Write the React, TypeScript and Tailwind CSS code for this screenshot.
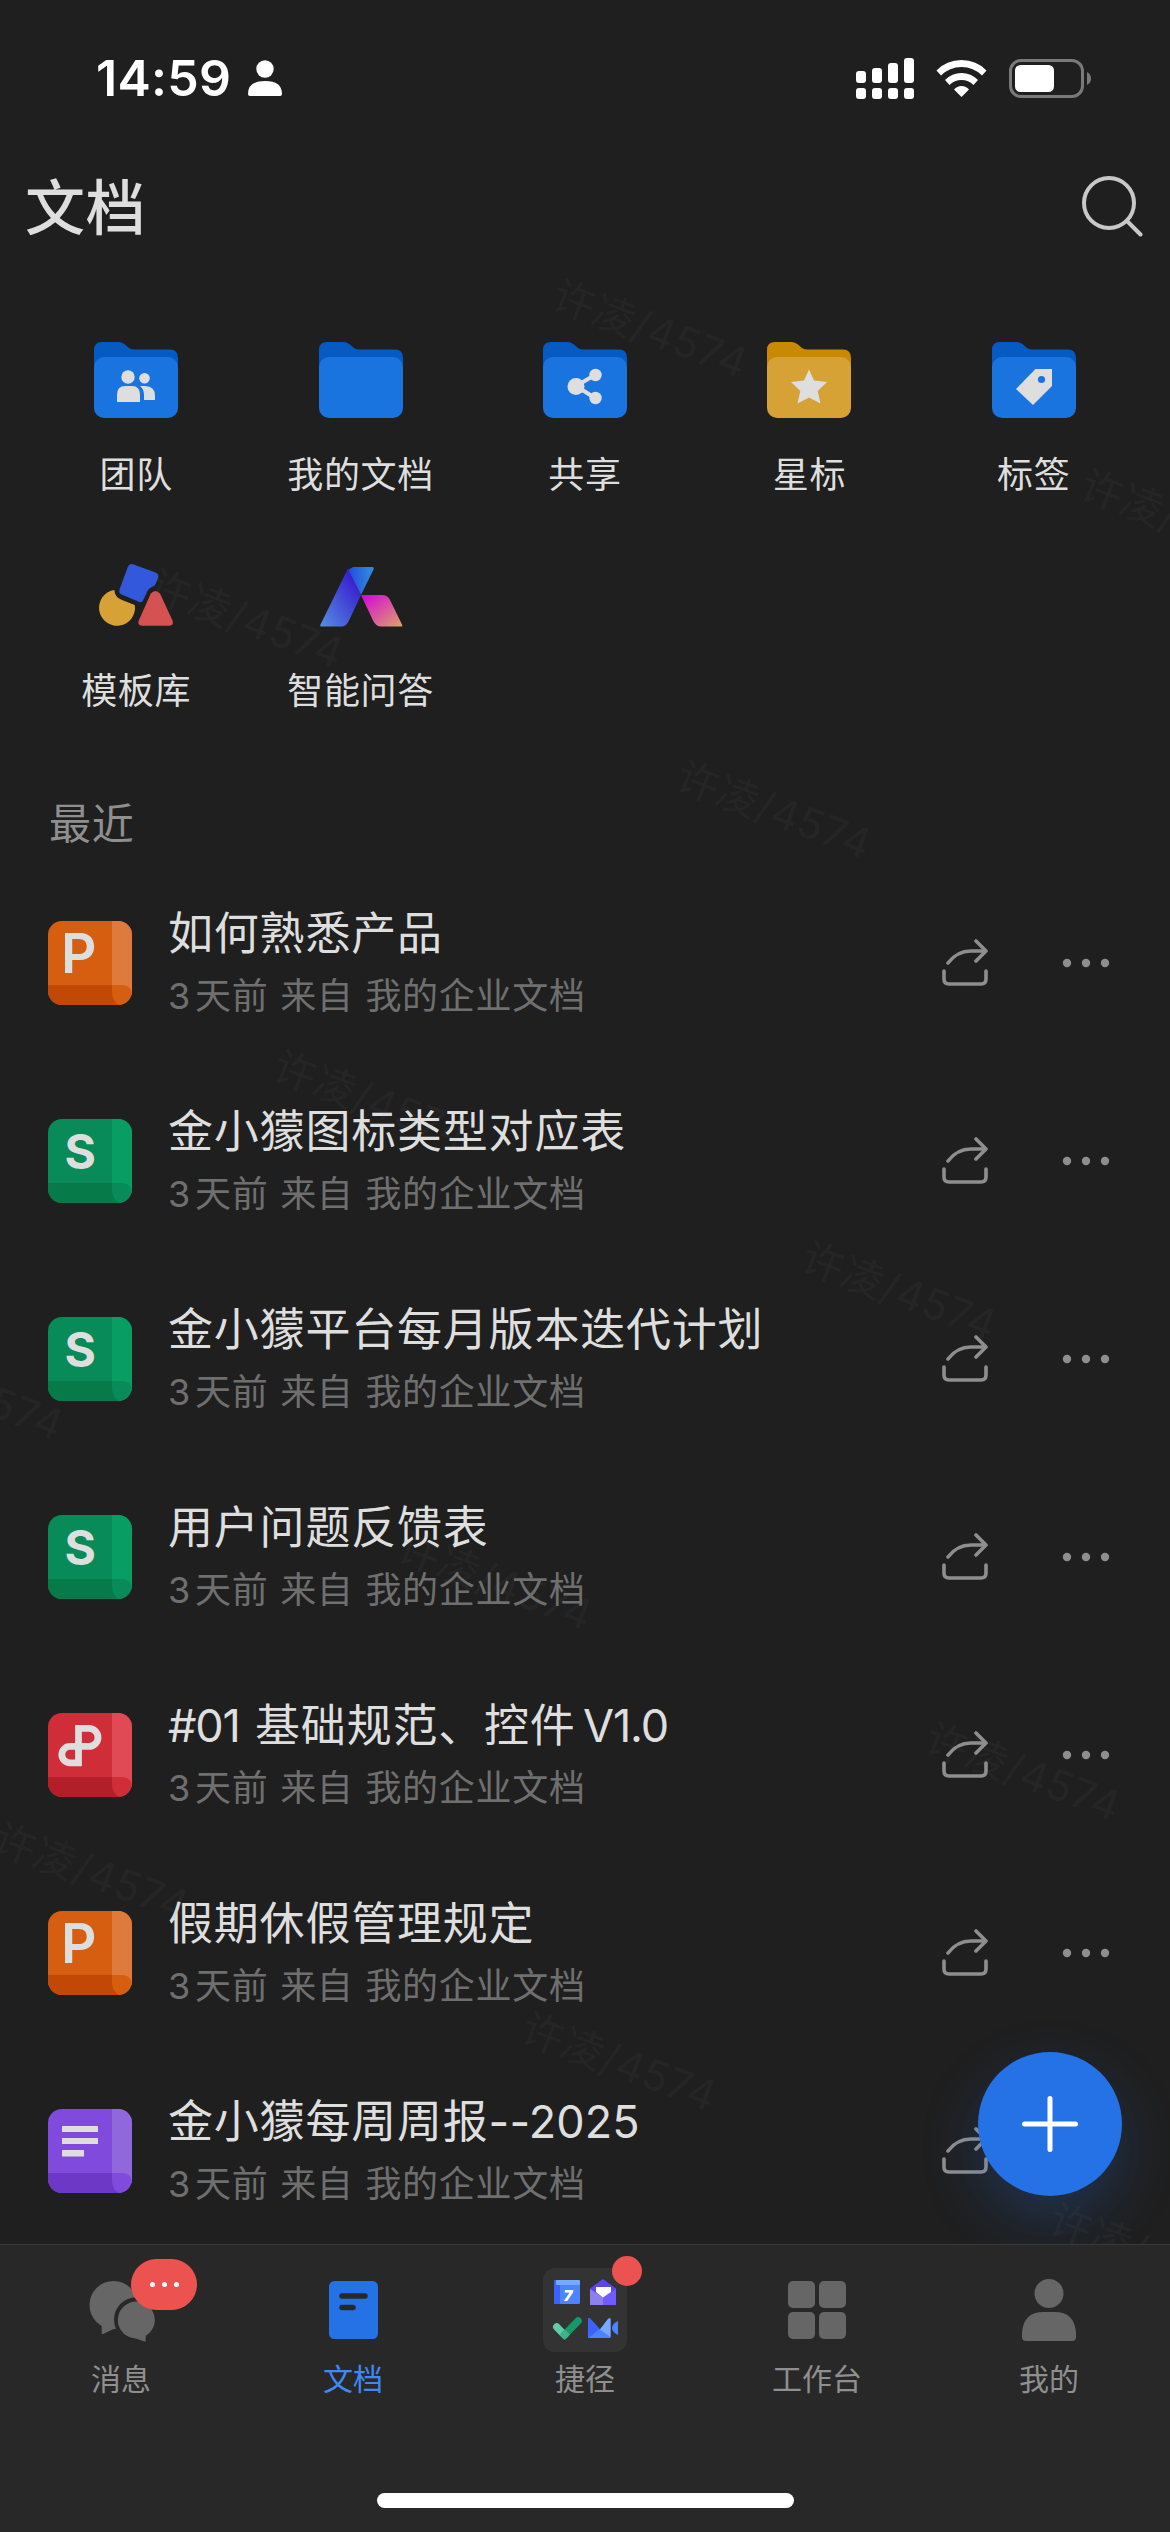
import React, { useState } from "react";

type DocKind = "ppt" | "sheet" | "pdf" | "form";

const docs: { title: string; kind: DocKind; latin?: string }[] = [
  { title: "如何熟悉产品", kind: "ppt" },
  { title: "金小獴图标类型对应表", kind: "sheet" },
  { title: "金小獴平台每月版本迭代计划", kind: "sheet" },
  { title: "用户问题反馈表", kind: "sheet" },
  { title: "#01 基础规范、控件 V1.0", kind: "pdf", latin: "tracking-[-1.2px] first:mr-1 last:-ml-1" },
  { title: "假期休假管理规定", kind: "ppt" },
  { title: "金小獴每周周报--2025", kind: "form", latin: "tracking-[0.1px]" },
];

const docColors: Record<DocKind, { main: string; side: string; bottom: string }> = {
  ppt: { main: "#d65e10", side: "#dd7a3c", bottom: "#c24805" },
  sheet: { main: "#088b58", side: "#089e63", bottom: "#067a48" },
  pdf: { main: "#cf2e38", side: "#e04a54", bottom: "#b31f28" },
  form: { main: "#804bdd", side: "#9167dc", bottom: "#6d38c6" },
};

// watermark centres
const watermarks = [
  [650, 329],
  [1178, 519],
  [246, 619],
  [774, 810],
  [371, 1100],
  [899, 1291],
  [-34, 1391],
  [495, 1581],
  [1023, 1772],
  [91, 1872],
  [619, 2062],
  [1147, 2253],
];

const DocIcon = ({ kind }: { kind: DocKind }) => {
  const c = docColors[kind];
  return (
    <svg width="84" height="84" viewBox="0 0 84 84" className="shrink-0 overflow-hidden rounded-[14px]">
      <rect width="84" height="84" fill={c.main} />
      <rect x="64" width="20" height="74" fill={c.side} />
      <rect y="64" width="74" height="20" fill={c.bottom} />
      <path d="M64 64H75Q84 65 84 74V84H71Q64 80 64 71Z" fill={c.main} />
      {kind === "ppt" && (
        <text x="13" y="52" fontSize="55" fontWeight="600" fill="#dedede" fontFamily="Inter, sans-serif">
          P
        </text>
      )}
      {kind === "sheet" && (
        <text x="16.500" y="49.500" fontSize="48" fontWeight="700" fill="#dedede" fontFamily="Inter, sans-serif">
          S
        </text>
      )}
      {kind === "pdf" && (
        <path
          d="M30.5 49.8V15.4H41a9 9 0 0 1 0 18H22a8.2 8.2 0 0 0 0 16.4Z"
          fill="none"
          stroke="#dedede"
          strokeWidth="6.8"
        />
      )}
      {kind === "form" && <path d="M14 17h36v6H14zM14 29h36v6H14zM14 41h22v6.5H14z" fill="#dedede" />}
    </svg>
  );
};

// latin runs get their own letter spacing
const DocTitle = ({ title, latin }: { title: string; latin?: string }) => (
  <p className="text-[45px] leading-[63px] tracking-[0.8px]">
    {title
      .split(/([ -~]+)/)
      .filter(Boolean)
      .map((part, i) => (
        <span key={i} className={/^[ -~]/.test(part) ? latin : undefined}>
          {part}
        </span>
      ))}
  </p>
);

const Folder = ({ gold, children }: { gold?: boolean; children?: React.ReactNode }) => (
  <svg width="84" height="76" viewBox="0 0 84 76">
    <path d="M0 40V8Q0 0 8 0H25Q28 0 31 2.5L35 6Q37.500 7.500 41 7.500H76Q84 7.500 84 16V40Z" fill={gold ? "#ca8903" : "#055bc2"} />
    <rect y="15" width="84" height="61" rx="10" fill={gold ? "#d6a235" : "#1a74df"} />
    <g fill="#dedede">{children}</g>
  </svg>
);

const shortcuts = [
  {
    label: "团队",
    icon: (
      <Folder>
        <circle cx="34" cy="35" r="6.700" />
        <circle cx="50.500" cy="36.300" r="5.300" />
        <path d="M23 60V53Q23 44 31 44H38Q46 44 46 53V60Z" />
        <path d="M46 44H51Q61 44 61 54V58H50V53Q50 47 46 44Z" />
      </Folder>
    ),
  },
  { label: "我的文档", icon: <Folder /> },
  {
    label: "共享",
    icon: (
      <Folder>
        <path d="M33 44L52 33M33 44L52 56" stroke="#dedede" strokeWidth="4" />
        <circle cx="33" cy="44.500" r="8.500" />
        <circle cx="52.500" cy="33" r="6.200" />
        <circle cx="52.500" cy="56" r="6.200" />
      </Folder>
    ),
  },
  {
    label: "星标",
    icon: (
      <Folder gold>
        <path d="M42 27.500L47 38.500L60 40L50.700 49L53.500 61.500L42 55.500L30.500 61.500L33.300 49L24 40L37 38.500Z" />
      </Folder>
    ),
  },
  {
    label: "标签",
    icon: (
      <Folder>
        <path d="M43.500 27H60V44L41 63L24 47Z" />
        <circle cx="49.500" cy="37.500" r="3.600" fill="#1a74df" />
      </Folder>
    ),
  },
  {
    label: "模板库",
    icon: (
      <svg width="84" height="84" viewBox="0 0 84 84">
        <path d="M20.400 36Q20.500 43.500 28 46L40.800 51A18 18 0 1 1 20.400 36Z" fill="#d6a235" />
        <path
          d="M34 12.500Q35.500 9 39 10.300L61.500 18.500Q65 20 64.200 23.500L61.800 29.500Q61 32 58.500 32.500Q55 34 53 38L49 46.500Q48 48.800 45.500 48L27.500 40.500Q24.500 39 25.500 35.500Z"
          fill="#3458db"
        />
        <path d="M56.800 39.500Q61.400 34.500 66 39.500L78.500 66.500Q80 71.500 75.500 71.800H48Q43.200 71.500 44.800 66.500Z" fill="#d55252" />
      </svg>
    ),
  },
  {
    label: "智能问答",
    icon: (
      <svg width="84" height="84" viewBox="0 0 84 84">
        <defs>
          <linearGradient id="stem" x1="1" y1="0" x2="0" y2="1">
            <stop offset="0.200" stopColor="#3a22d0" />
            <stop offset="1" stopColor="#5590e0" />
          </linearGradient>
          <linearGradient id="cap" x1="0" y1="0" x2="1" y2="0">
            <stop offset="0" stopColor="#234bdc" />
            <stop offset="1" stopColor="#328fdc" />
          </linearGradient>
          <linearGradient id="leg" x1="0" y1="0" x2="1" y2="1">
            <stop offset="0" stopColor="#d303dc" />
            <stop offset="1" stopColor="#dfa269" />
          </linearGradient>
        </defs>
        <path d="M34 13H53Q55.500 13 54.500 15.500L42 41L29 16Z" fill="url(#cap)" />
        <path d="M29 14.500L42 41L30 66.500Q27.500 72.500 22 72.500H2Q0.500 72.500 1.500 70.500Z" fill="url(#stem)" />
        <path d="M42 41H63Q68.500 41 71 46L83 70.500Q84 72.500 82 72.500H62Q57 72.500 54 66.500Z" fill="url(#leg)" />
      </svg>
    ),
  },
];

const tabs = [
  {
    label: "消息",
    icon: (
      <svg width="66" height="60" viewBox="-1 -1 66 60" className="overflow-visible">
        <path d="M12.700 38V52.500Q12.700 53.500 14 53L28 46.500V38Z" fill="#666" />
        <circle cx="24.500" cy="24" r="24" fill="#666" />
        <circle cx="47.300" cy="38.500" r="22.300" fill="#282828" />
        <circle cx="47.300" cy="39" r="18.500" fill="#666" />
        <path d="M34 52Q37 54.500 41 55.500L55.500 60.500Q56.700 61 56.700 59.500V52L60 40Z" fill="#666" />
      </svg>
    ),
    badge: (
      <span className="absolute -top-[26px] left-[35px] flex h-[51px] w-[66px] items-center justify-center gap-[7px] rounded-full bg-[#ec5350]">
        <i className="size-[5px] rounded-full bg-white" />
        <i className="size-[5px] rounded-full bg-white" />
        <i className="size-[5px] rounded-full bg-white" />
      </span>
    ),
  },
  {
    label: "文档",
    icon: (
      <svg width="49" height="58" viewBox="0 0 49 58">
        <rect width="49" height="58" rx="5.500" fill="#2572e6" />
        <path d="M13 15H36M13 26.500H24" stroke="#282828" strokeWidth="5.500" strokeLinecap="round" />
      </svg>
    ),
  },
  {
    label: "捷径",
    icon: (
      <svg width="84" height="84" viewBox="0 0 84 84">
        <rect width="84" height="84" rx="12" fill="#333" />
        <rect x="11" y="12" width="26" height="24" rx="1.500" fill="#4c84ff" />
        <rect x="11" y="12" width="6" height="24" rx="1" fill="#3a62ff" />
        <rect x="13" y="12" width="24" height="5" rx="1" fill="#78a8ff" />
        <text x="20.500" y="32.500" fontSize="15" fontWeight="900" fontStyle="italic" fill="#fff" fontFamily="Inter, sans-serif">
          7
        </text>
        <path d="M60 11L73 20.500V37H47V20.500Z" fill="#5b47ec" />
        <path d="M47 21L60 29.500V37H47Z" fill="#8d80ea" />
        <path d="M73 21L60 29.500V37H73Z" fill="#6f5bff" />
        <path d="M53 19H68V24L60 29.500L53 24Z" fill="#fff" />
        <path d="M13.800 59L21.500 67" stroke="#63cba6" strokeWidth="7.500" strokeLinecap="round" />
        <path d="M21.500 67L35 53" stroke="#129a68" strokeWidth="7.500" strokeLinecap="round" />
        <path d="M17 67L22 61.500L27 66.500L21.500 72Z" fill="#3eb489" />
        <path d="M45 51Q45 49.500 47 50.500L57 61.500L65 51Q67.500 49.500 67.500 51V70H45Z" fill="#4c84ff" />
        <path d="M45 51Q45 49.500 47 50.500L56.500 61L45.500 70Z" fill="#3a62ff" />
        <path d="M67.500 51Q67.500 49.500 65 51L57 61.500L67.500 69Z" fill="#78a8ff" />
        <path d="M75 53V67Q69 64 69 60Q69 56 75 53Z" fill="#4c84ff" />
      </svg>
    ),
    badge: <span className="absolute -top-[29px] left-[52px] size-[30px] rounded-full bg-[#ec5350]" />,
  },
  {
    label: "工作台",
    icon: (
      <svg width="58" height="58" viewBox="0 0 58 58" fill="#666">
        <rect width="27" height="27" rx="5" />
        <rect x="31" width="27" height="27" rx="5" />
        <rect y="31" width="27" height="27" rx="5" />
        <rect x="31" y="31" width="27" height="27" rx="5" />
      </svg>
    ),
  },
  {
    label: "我的",
    icon: (
      <svg width="54" height="62" viewBox="0 0 54 62" fill="#666">
        <circle cx="27" cy="14.500" r="14.500" />
        <path d="M0 58V53Q2 33 21 33H33Q52 33 54 53V58Q54 62 50 62H4Q0 62 0 58Z" />
      </svg>
    ),
  },
];

const StatusBar = () => (
  <div className="flex h-[156px] shrink-0 items-center justify-between pr-[79px] pl-[96px] text-white">
    <div className="flex items-center gap-[17px]">
      <span className="text-[50px] leading-none font-semibold tracking-[0.3px]">14:59</span>
      <svg width="34" height="36" viewBox="0 0 34 36" fill="#fff">
        <circle cx="17" cy="9" r="8.700" />
        <path d="M0 34Q0 21 17 21Q34 21 34 34Q34 36 32 36H2Q0 36 0 34Z" />
      </svg>
    </div>
    <div className="flex items-center">
      <svg width="58" height="41" viewBox="0 0 58 41" fill="#fff">
        <rect y="13" width="10" height="12" rx="3" />
        <rect x="16" y="10" width="10" height="15" rx="3" />
        <rect x="32" y="5" width="10" height="20" rx="3" />
        <rect x="48" width="10" height="25" rx="3" />
        <rect y="30" width="10" height="11" rx="3" />
        <rect x="16" y="30" width="10" height="11" rx="3" />
        <rect x="32" y="30" width="10" height="11" rx="3" />
        <rect x="48" y="30" width="10" height="11" rx="3" />
      </svg>
      <svg width="51" height="37" viewBox="0 0 51 37" className="ml-[22px]" fill="#fff">
        <path d="M0.500 10.500Q10.500 0 25.500 0Q40.500 0 50.500 10.500L46 15.500Q37.500 7 25.500 7Q13.500 7 5 15.500Z" />
        <path d="M9 20Q16 13 25.500 13Q35 13 42 20L37.500 25Q32.500 20 25.500 20Q18.500 20 13.500 25Z" />
        <path d="M18 29.500Q21 26 25.500 26Q30 26 33 29.500L25.500 37Z" />
      </svg>
      <svg width="82" height="39" viewBox="0 0 82 39" className="ml-[22px]">
        <rect x="1.500" y="1.500" width="72" height="36" rx="10.500" fill="none" stroke="#797979" strokeWidth="3" />
        <rect x="6" y="6" width="39" height="27" rx="5.500" fill="#fff" />
        <path d="M78 13Q82 15 82 19.500Q82 24 78 26Z" fill="#797979" />
      </svg>
    </div>
  </div>
);

export default function App() {
  const [activeTab, setActiveTab] = useState("文档");

  return (
    <div className="relative flex h-[2532px] w-[1170px] flex-col overflow-hidden bg-[#1f1f1f] font-['Inter','Noto_Sans_CJK_SC',sans-serif] text-[#dedede]">
      <StatusBar />
      <header className="flex h-[100px] shrink-0 items-center justify-between pr-[27px] pl-[25px]">
        <h1 className="pt-[3px] text-[60px] leading-none font-medium tracking-[0.6px]">文档</h1>
        <svg width="62" height="62" viewBox="0 0 62 62" fill="none" stroke="#c8c8c8" strokeWidth="4" strokeLinecap="round">
          <circle cx="28" cy="28" r="25" />
          <path d="M46 46L59.500 59.500" />
        </svg>
      </header>

      <main className="min-h-0 flex-1 overflow-hidden">
        <div className="grid grid-cols-5 gap-y-[55px] px-6 pt-[82px]">
          {shortcuts.map((item) => (
            <button key={item.label} className="flex flex-col items-center">
              <span className="flex h-[84px] items-center">{item.icon}</span>
              <span className="mt-[29px] text-[36px] leading-[48px] tracking-[0.7px] whitespace-nowrap">{item.label}</span>
            </button>
          ))}
        </div>

        <h2 className="mt-[79px] px-[49px] text-[42px] leading-[60px] tracking-[0.8px] text-[#8f8f8f]">最近</h2>
        <ul className="mt-[10px]">
          {docs.map((doc) => (
            <li key={doc.title} className="flex h-[198px] items-center pr-[60px] pl-12">
              <DocIcon kind={doc.kind} />
              <div className="ml-[36px] flex-1 pt-[3px] whitespace-nowrap">
                <DocTitle title={doc.title} latin={doc.latin} />
                <p className="text-[36px] leading-[63px] tracking-[0.7px] text-[#6f6f6f] [word-spacing:1px]">
                  <span className="mr-1">3</span>天前 来自 我的企业文档
                </p>
              </div>
              <button className="mr-[73px]">
                <svg width="48" height="48" viewBox="0 0 48 48" fill="none" stroke="#8e8e8e" strokeWidth="3.600" strokeLinecap="round" strokeLinejoin="round">
                  <path d="M3 32V40Q3 45 8 45H40Q45 45 45 40V32" />
                  <path d="M7 24Q16 12 30 12H44M35 2L45 12L35 22" />
                </svg>
              </button>
              <button>
                <svg width="48" height="10" viewBox="0 0 48 10" fill="#8e8e8e">
                  <circle cx="5" cy="5" r="4.200" />
                  <circle cx="24" cy="5" r="4.200" />
                  <circle cx="43" cy="5" r="4.200" />
                </svg>
              </button>
            </li>
          ))}
        </ul>
      </main>

      <div className="pointer-events-none absolute inset-0">
        {watermarks.map(([x, y]) => (
          <span
            key={`${x}-${y}`}
            className="absolute -translate-x-1/2 -translate-y-1/2 rotate-[20.5deg] text-[42px] leading-none tracking-[0.6px] whitespace-nowrap text-[#808080]/8"
            style={{ left: x, top: y }}
          >
            许凌/4574
          </span>
        ))}
      </div>

      <button className="absolute top-[2052px] left-[978px] flex size-[144px] items-center justify-center rounded-full bg-[#2572e6] shadow-[0_24px_60px_rgba(37,114,230,0.24)]">
        <svg width="56" height="56" viewBox="0 0 56 56" stroke="#fff" strokeWidth="5" strokeLinecap="round">
          <path d="M28 2.500V53.500M2.500 28H53.500" />
        </svg>
      </button>

      <nav className="relative flex h-[288px] shrink-0 flex-col items-center justify-between border-t border-[#3a3a3a] bg-[#282828] pb-6">
        <div className="flex w-full px-[5px] pt-[23px]">
          {tabs.map((tab) => (
            <button key={tab.label} onClick={() => setActiveTab(tab.label)} className="flex w-[232px] flex-col items-center">
              <span className="flex h-[84px] items-center">
                <span className="relative flex h-[50px] w-[50px] items-center justify-center">
                  <span className="shrink-0">{tab.icon}</span>
                  {tab.badge}
                </span>
              </span>
              <span className={`mt-[7px] text-[30px] leading-10 ${activeTab === tab.label ? "text-[#4088f5]" : "text-[#8f8f8f]"}`}>
                {tab.label}
              </span>
            </button>
          ))}
        </div>
        <div className="h-[15px] w-[417px] rounded-full bg-white" />
      </nav>
    </div>
  );
}
